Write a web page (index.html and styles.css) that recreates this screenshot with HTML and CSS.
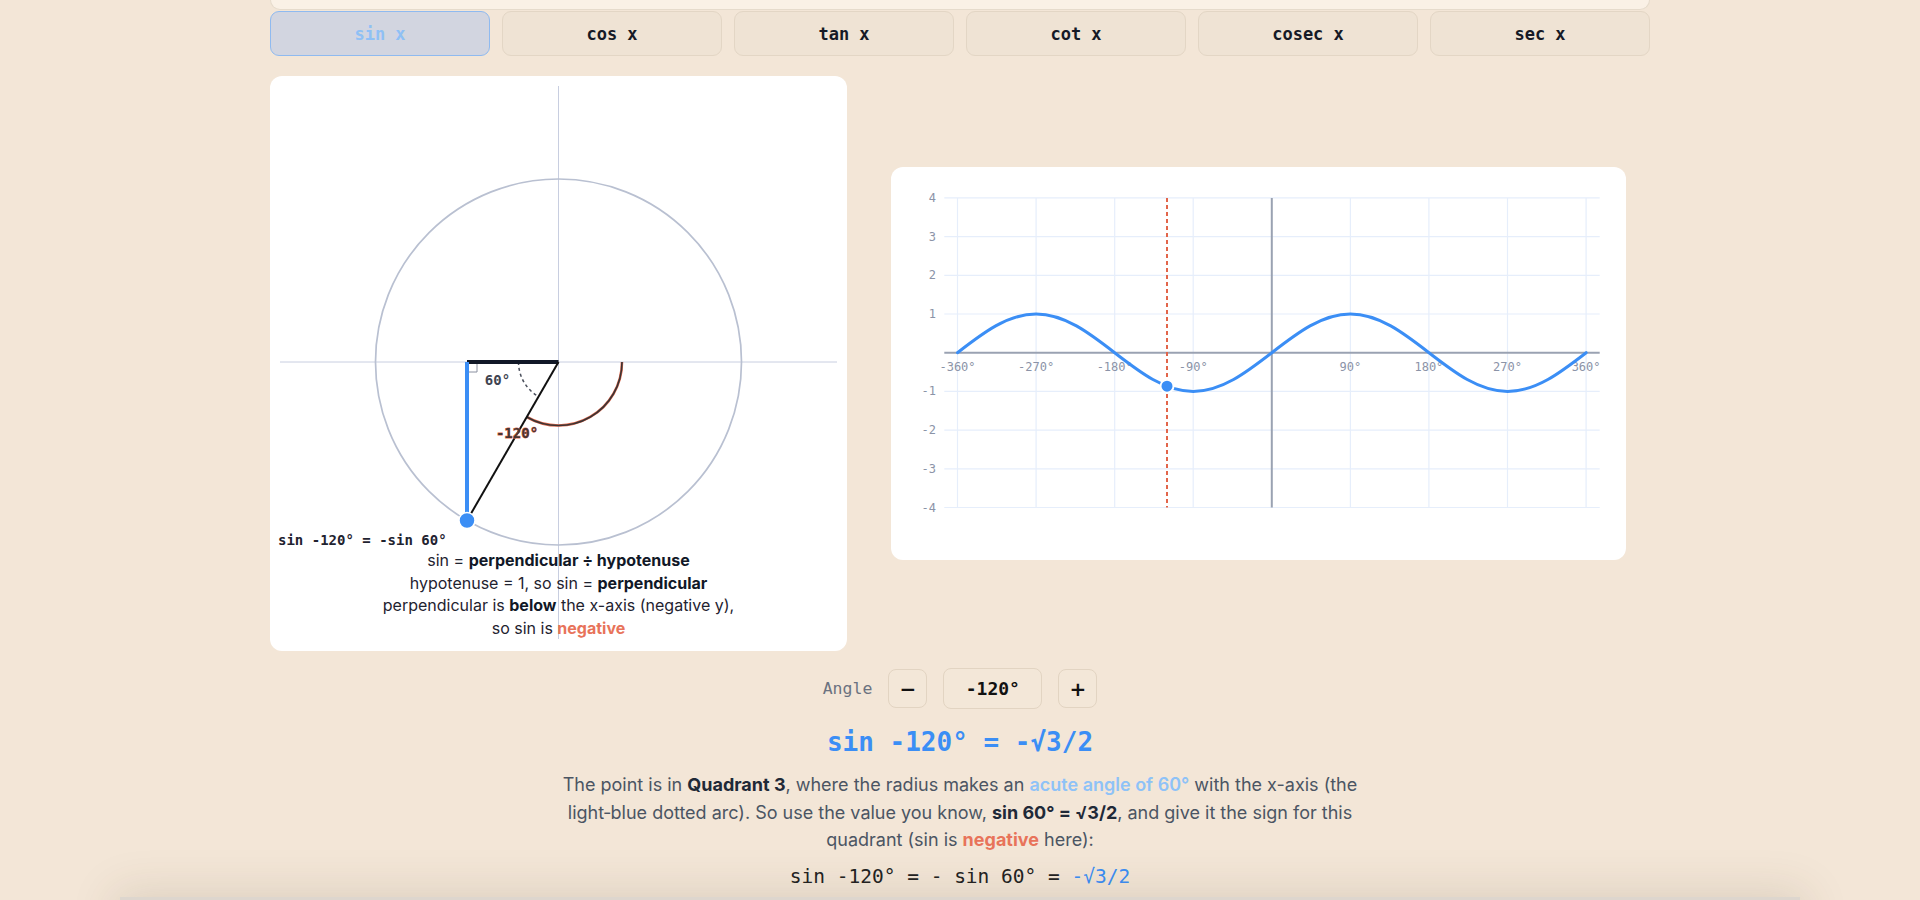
FILE: index.html
```html
<!DOCTYPE html>
<html lang="en">
<head>
<meta charset="utf-8">
<title>Trig function explorer</title>
<link rel="stylesheet" href="styles.css">
</head>
<body>
<div class="page">
  <div class="topcard"></div>
  <div class="tabs">
    <button class="tab active">sin x</button>
    <button class="tab">cos x</button>
    <button class="tab">tan x</button>
    <button class="tab">cot x</button>
    <button class="tab">cosec x</button>
    <button class="tab">sec x</button>
  </div>

  <div class="viz">
    <div class="card circle-card">
      <svg class="circle-svg" width="577" height="575" viewBox="0 0 577 575">
        <line class="axis-light" x1="10" y1="286" x2="567" y2="286"/>
        <line class="axis-light" x1="288.5" y1="10" x2="288.5" y2="563"/>
        <circle class="unit" cx="288.5" cy="286" r="183"/>
        <path class="ref-arc" d="M248.5,286 A40,40 0 0 0 268.5,320.64"/>
        <path class="angle-arc-under" d="M352,286 A63.5,63.5 0 0 1 256.75,341"/>
        <path class="angle-arc" d="M352,286 A63.5,63.5 0 0 1 256.75,341"/>
        <path class="right-mark" d="M207,286 V296 H197"/>
        <line class="adjacent" x1="197" y1="286" x2="288.5" y2="286"/>
        <line class="perp" x1="197" y1="286" x2="197" y2="444.5"/>
        <line class="radius" x1="288.5" y1="286" x2="197" y2="444.5"/>
        <circle class="pt" cx="197" cy="444.5" r="8"/>
        <text class="lbl-ref" x="227.5" y="303.5">60°</text>
        <text class="lbl-angle" x="247" y="357">-120°</text>
      </svg>
      <div class="circle-notes">
        <div class="identity">sin -120° = -sin 60°</div>
        <p class="why">sin = <b>perpendicular ÷ hypotenuse</b><br>hypotenuse = 1, so sin = <b>perpendicular</b><br>perpendicular is <b>below</b> the x-axis (negative y),<br>so sin is <b class="neg">negative</b></p>
      </div>
    </div>

    <div class="card graph-card">
      <svg class="graph-svg" width="735" height="393" viewBox="0 0 735 393">
        <g class="grid">
          <line x1="53.3" y1="30.9" x2="708.7" y2="30.9"/>
          <line x1="53.3" y1="69.6" x2="708.7" y2="69.6"/>
          <line x1="53.3" y1="108.3" x2="708.7" y2="108.3"/>
          <line x1="53.3" y1="147" x2="708.7" y2="147"/>
          <line x1="53.3" y1="224.4" x2="708.7" y2="224.4"/>
          <line x1="53.3" y1="263.1" x2="708.7" y2="263.1"/>
          <line x1="53.3" y1="301.8" x2="708.7" y2="301.8"/>
          <line x1="53.3" y1="340.5" x2="708.7" y2="340.5"/>
          <line x1="66.5" y1="30.9" x2="66.5" y2="340.5"/>
          <line x1="145.1" y1="30.9" x2="145.1" y2="340.5"/>
          <line x1="223.7" y1="30.9" x2="223.7" y2="340.5"/>
          <line x1="302.2" y1="30.9" x2="302.2" y2="340.5"/>
          <line x1="459.4" y1="30.9" x2="459.4" y2="340.5"/>
          <line x1="537.9" y1="30.9" x2="537.9" y2="340.5"/>
          <line x1="616.5" y1="30.9" x2="616.5" y2="340.5"/>
          <line x1="695.1" y1="30.9" x2="695.1" y2="340.5"/>
        </g>
        <line class="g-axis" x1="53.3" y1="185.7" x2="708.7" y2="185.7"/>
        <line class="g-axis" x1="380.8" y1="30.9" x2="380.8" y2="340.5"/>
        <g class="ylab">
          <text x="45" y="30.9">4</text>
          <text x="45" y="69.6">3</text>
          <text x="45" y="108.3">2</text>
          <text x="45" y="147">1</text>
          <text x="45" y="224.4">-1</text>
          <text x="45" y="263.1">-2</text>
          <text x="45" y="301.8">-3</text>
          <text x="45" y="340.5">-4</text>
        </g>
        <g class="xlab">
          <text x="66.5" y="199.5">-360°</text>
          <text x="145.1" y="199.5">-270°</text>
          <text x="223.7" y="199.5">-180°</text>
          <text x="302.2" y="199.5">-90°</text>
          <text x="459.4" y="199.5">90°</text>
          <text x="537.9" y="199.5">180°</text>
          <text x="616.5" y="199.5">270°</text>
          <text x="695.1" y="199.5">360°</text>
        </g>
        <line class="marker" x1="276" y1="30.9" x2="276" y2="340.5"/>
        <path class="curve" d="M66.5,185.7 c25.63,-19.83 50.15,-38.7 78.58,-38.7 c28.43,0 52.95,18.87 78.58,38.7 c25.63,19.83 50.15,38.7 78.58,38.7 c28.43,0 52.95,-18.87 78.58,-38.7 c25.63,-19.83 50.15,-38.7 78.58,-38.7 c28.43,0 52.95,18.87 78.58,38.7 c25.63,19.83 50.15,38.7 78.58,38.7 c28.43,0 52.95,-18.87 78.58,-38.7"/>
        <circle class="g-pt" cx="276" cy="219.2" r="6.5"/>
      </svg>
    </div>
  </div>

  <div class="controls">
    <span class="ctl-label">Angle</span>
    <button class="step">−</button>
    <div class="angle-box">-120°</div>
    <button class="step">+</button>
  </div>

  <div class="result">sin -120° = -√3/2</div>

  <p class="explain">The point is in <b>Quadrant 3</b>, where the radius makes an <span class="acute">acute angle of 60°</span> with the x-axis (the light&#8209;blue dotted arc). So use the value you know, <b>sin 60° = √3/2</b>, and give it the sign for this quadrant (sin is <span class="neg">negative</span> here):</p>

  <div class="formula">sin -120° = - sin 60° = <span class="blue">-√3/2</span></div>
</div>
<div class="bottom-shade"></div>
</body>
</html>
```
FILE: styles.css
```css
* { box-sizing: border-box; }
html, body { margin: 0; padding: 0; }
body {
  background: #f3e6d7;
  font-family: Inter, "Noto Sans", sans-serif;
  color: #1f2937;
  overflow: hidden;
  height: 900px;
}
.page {
  width: 1380px;
  margin: 0 auto;
}
.topcard {
  height: 10px;
  background: #faf1e6;
  border: 1px solid #e6dbcc;
  border-top: none;
  border-radius: 0 0 14px 14px;
}
.tabs {
  display: grid;
  grid-template-columns: repeat(6, 1fr);
  gap: 12px;
  margin-top: 1px;
}
.tab {
  height: 45px;
  border: 1px solid #e3d6c5;
  background: #efe3d4;
  border-radius: 9px;
  font-family: "DejaVu Sans Mono", "Liberation Mono", monospace;
  font-weight: 700;
  font-size: 17px;
  color: #161a26;
  padding: 0;
}
.tab.active {
  background: #d2d5e0;
  border-color: #8fbaf0;
  color: #8fc0f5;
}
.viz {
  display: flex;
  align-items: center;
  gap: 44px;
  margin-top: 20px;
}
.card {
  background: #ffffff;
  border-radius: 12px;
}
.circle-card {
  position: relative;
  width: 577px;
  height: 575px;
}
.graph-card {
  width: 735px;
  height: 393px;
}
svg { display: block; }

/* unit circle */
.axis-light { stroke: #c8cee0; stroke-width: 1; }
.unit { fill: none; stroke: #b9c0d1; stroke-width: 1.7; }
.ref-arc { fill: none; stroke: #4a4f5c; stroke-width: 1.5; stroke-dasharray: 3 3; }
.angle-arc-under { fill: none; stroke: #e0664a; stroke-width: 2.6; }
.angle-arc { fill: none; stroke: #3a3535; stroke-width: 1.6; }
.right-mark { fill: none; stroke: #8a90a0; stroke-width: 1; }
.adjacent { stroke: #111827; stroke-width: 4; }
.perp { stroke: #3b8ef5; stroke-width: 4; }
.radius { stroke: #111111; stroke-width: 2; }
.pt { fill: #3b8ef5; stroke: #ffffff; stroke-width: 1.5; }
.lbl-ref, .lbl-angle {
  font-family: "DejaVu Sans Mono", monospace;
  font-weight: 700;
  font-size: 14px;
  text-anchor: middle;
  dominant-baseline: central;
}
.lbl-ref { fill: #3f4451; }
.lbl-angle { fill: #4a3530; stroke: #e5694d; stroke-width: 0.8; paint-order: stroke; }

.circle-notes {
  position: absolute;
  left: 0;
  right: 0;
  top: 456px;
}
.identity {
  padding-left: 8px;
  font-family: "DejaVu Sans Mono", monospace;
  font-weight: 700;
  font-size: 14px;
  line-height: 17px;
  color: #1f2330;
}
.why {
  margin: 0;
  text-align: center;
  font-size: 16px;
  line-height: 22.5px;
  color: #1f2330;
}
.why b { font-weight: 700; color: #111827; }
.why .neg { color: #e8735a; }

/* graph */
.grid line { stroke: #e6eefb; stroke-width: 1.2; }
.g-axis { stroke: #9aa2b2; stroke-width: 2; }
.ylab text, .xlab text {
  font-family: "DejaVu Sans Mono", monospace;
  font-size: 12px;
  fill: #8b93a7;
  dominant-baseline: central;
}
.ylab text { text-anchor: end; }
.xlab text { text-anchor: middle; }
.marker { stroke: #e2654a; stroke-width: 2; stroke-dasharray: 4 3; }
.curve { fill: none; stroke: #3b8ef5; stroke-width: 3; stroke-linecap: round; }
.g-pt { fill: #3b8ef5; stroke: #ffffff; stroke-width: 2; }

/* controls */
.controls {
  display: flex;
  justify-content: center;
  align-items: center;
  gap: 16px;
  margin-top: 17px;
  height: 41px;
}
.ctl-label {
  font-family: "DejaVu Sans Mono", monospace;
  font-size: 16.5px;
  color: #6b7280;
}
.step {
  width: 39px;
  height: 39px;
  padding: 0;
  border: 1px solid #e2d4c2;
  background: #f3e7d8;
  border-radius: 8px;
  font-family: "DejaVu Sans", sans-serif;
  font-size: 20px;
  font-weight: 700;
  color: #111111;
  line-height: 1;
}
.angle-box {
  width: 99px;
  height: 41px;
  border: 1px solid #e2d4c2;
  border-radius: 8px;
  background: #f3e7d8;
  display: flex;
  align-items: center;
  justify-content: center;
  font-family: "DejaVu Sans Mono", monospace;
  font-weight: 700;
  font-size: 18px;
  color: #111111;
}
.result {
  margin-top: 18px;
  text-align: center;
  font-family: "DejaVu Sans Mono", monospace;
  font-weight: 700;
  font-size: 26px;
  line-height: 31px;
  color: #3b8ef5;
}
.explain {
  width: 800px;
  margin: 13px auto 0;
  text-align: center;
  font-size: 18px;
  line-height: 27.5px;
  color: #4b5563;
}
.explain b { color: #1f2937; font-weight: 700; }
.explain .acute { color: #8ec2f7; font-weight: 600; }
.explain .neg { color: #e8735a; font-weight: 700; }
.formula {
  margin-top: 10px;
  text-align: center;
  font-family: "DejaVu Sans Mono", monospace;
  font-size: 19.5px;
  line-height: 25px;
  color: #222222;
}
.formula .blue { color: #3b8ef5; }
.bottom-shade {
  position: fixed;
  left: 120px;
  right: 120px;
  bottom: -47px;
  height: 50px;
  background: #ddd6ce;
  box-shadow: 0 0 45px 6px rgba(80, 60, 40, 0.13);
}
```
